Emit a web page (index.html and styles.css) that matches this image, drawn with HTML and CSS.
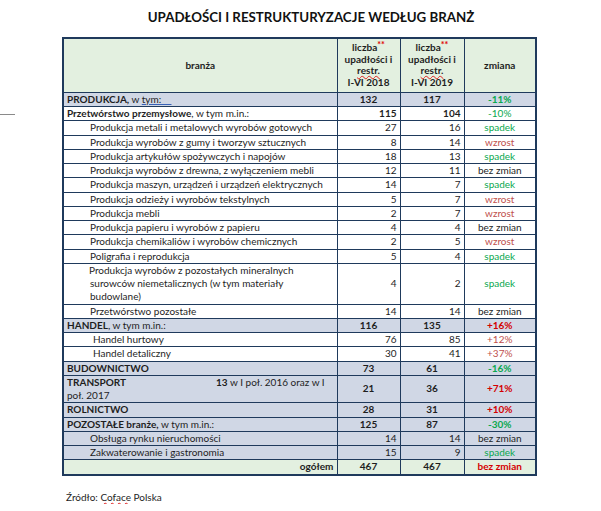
FILE: index.html
```html
<!DOCTYPE html>
<html lang="pl">
<head>
<meta charset="utf-8">
<title>Upadłości i restrukturyzacje według branż</title>
<link rel="stylesheet" href="styles.css">
</head>
<body>
<div class="mark"></div>
<div class="page">
  <h1 class="title">UPADŁOŚCI I RESTRUKTURYZACJE WEDŁUG BRANŻ</h1>
  <table class="tbl">
    <colgroup><col class="c1"><col class="c2"><col class="c3"><col class="c4"></colgroup>
    <thead>
      <tr class="head">
        <th>branża</th>
        <th>liczba<span class="ast">**</span><br>upadłości i<br><span class="sp">restr.</span><br>I-VI 2018</th>
        <th>liczba<span class="ast">**</span><br>upadłości i<br><span class="sp">restr.</span><br>I-VI 2019</th>
        <th>zmiana</th>
      </tr>
    </thead>
    <tbody>
      <tr class="cat"><td class="l"><b>PRODUKCJA,</b> w <span class="tym">tym:&nbsp;&nbsp;&nbsp;&nbsp;</span></td><td class="c b">132</td><td class="c b">117</td><td class="z g b">-11%</td></tr>
      <tr><td class="l"><b>Przetwórstwo przemysłowe</b>, w tym m.in.:</td><td class="r b">115</td><td class="r b">104</td><td class="z g">-10%</td></tr>
      <tr><td class="s">Produkcja metali i metalowych wyrobów gotowych</td><td class="r">27</td><td class="r">16</td><td class="z g">spadek</td></tr>
      <tr><td class="s">Produkcja wyrobów z gumy i tworzyw sztucznych</td><td class="r">8</td><td class="r">14</td><td class="z rd">wzrost</td></tr>
      <tr><td class="s">Produkcja artykułów spożywczych i napojów</td><td class="r">18</td><td class="r">13</td><td class="z g">spadek</td></tr>
      <tr><td class="s">Produkcja wyrobów z drewna, z wyłączeniem mebli</td><td class="r">12</td><td class="r">11</td><td class="z">bez zmian</td></tr>
      <tr><td class="s">Produkcja maszyn, urządzeń i urządzeń elektrycznych</td><td class="r">14</td><td class="r">7</td><td class="z g">spadek</td></tr>
      <tr><td class="s">Produkcja odzieży i wyrobów tekstylnych</td><td class="r">5</td><td class="r">7</td><td class="z rd">wzrost</td></tr>
      <tr><td class="s">Produkcja mebli</td><td class="r">2</td><td class="r">7</td><td class="z rd">wzrost</td></tr>
      <tr><td class="s">Produkcja papieru i wyrobów z papieru</td><td class="r">4</td><td class="r">4</td><td class="z">bez zmian</td></tr>
      <tr><td class="s">Produkcja chemikaliów i wyrobów chemicznych</td><td class="r">2</td><td class="r">5</td><td class="z rd">wzrost</td></tr>
      <tr><td class="s">Poligrafia i reprodukcja</td><td class="r">5</td><td class="r">4</td><td class="z g">spadek</td></tr>
      <tr><td class="s multi">Produkcja wyrobów z pozostałych mineralnych<br>surowców niemetalicznych (w tym materiały<br>budowlane)</td><td class="r">4</td><td class="r">2</td><td class="z g">spadek</td></tr>
      <tr><td class="s">Przetwórstwo pozostałe</td><td class="r">14</td><td class="r">14</td><td class="z">bez zmian</td></tr>
      <tr class="cat"><td class="l"><b>HANDEL</b>, w tym m.in.:</td><td class="c b">116</td><td class="c b">135</td><td class="z rb b">+16%</td></tr>
      <tr><td class="s2">Handel hurtowy</td><td class="r">76</td><td class="r">85</td><td class="z rd">+12%</td></tr>
      <tr><td class="s2">Handel detaliczny</td><td class="r">30</td><td class="r">41</td><td class="z rd">+37%</td></tr>
      <tr class="cat"><td class="l"><b>BUDOWNICTWO</b></td><td class="c b">73</td><td class="c b">61</td><td class="z g b">-16%</td></tr>
      <tr class="cat"><td class="l"><b class="tl">TRANSPORT</b><b>13</b> w I poł. 2016 oraz w I<br>poł. 2017</td><td class="c b">21</td><td class="c b">36</td><td class="z rb b">+71%</td></tr>
      <tr class="cat"><td class="l"><b>ROLNICTWO</b></td><td class="c b">28</td><td class="c b">31</td><td class="z rb b">+10%</td></tr>
      <tr class="cat"><td class="l"><b>POZOSTAŁE branże,</b> w tym m.in.:</td><td class="c b">125</td><td class="c b">87</td><td class="z g b">-30%</td></tr>
      <tr class="cat"><td class="s">Obsługa rynku nieruchomości</td><td class="r">14</td><td class="r">14</td><td class="z">bez zmian</td></tr>
      <tr class="cat"><td class="s">Zakwaterowanie i gastronomia</td><td class="r">15</td><td class="r">9</td><td class="z g">spadek</td></tr>
      <tr class="tot"><td class="r b">ogółem</td><td class="c b">467</td><td class="c b">467</td><td class="z rb b">bez zmian</td></tr>
    </tbody>
  </table>
  <p class="src">Źródło: <span class="sp">Coface</span> Polska</p>
</div>
</body>
</html>
```

FILE: styles.css
```css
html, body {
  margin: 0;
  background: #ffffff;
}
body {
  font-family: Lato, "Open Sans", sans-serif;
  color: #1e1e1e;
  position: relative;
}
.mark {
  position: absolute;
  left: 0;
  top: 114px;
  width: 15px;
  height: 1px;
  background: #8a8a8a;
}
.page {
  padding-left: 62px;
  width: 476px;
}
.title {
  margin: 0;
  padding: 9px 0 0 22px;
  height: 28px;
  box-sizing: content-box;
  font-size: 13.3px;
  line-height: 16px;
  font-weight: 700;
  text-align: center;
  color: #111;
}
.tbl {
  border-collapse: collapse;
  table-layout: fixed;
  width: 474px;
  border: 2px solid #1f3a5c;
  font-size: 10px;
}
.c1 { width: 274px; }
.c2 { width: 63px; }
.c3 { width: 64px; }
.c4 { width: 72px; }
.tbl th, .tbl td {
  border: 1px solid #1f3a5c;
  padding: 0 3px;
  line-height: 13.25px;
  vertical-align: middle;
  white-space: nowrap;
  overflow: hidden;
}
.head th {
  background: #e3f0e0;
  font-weight: 700;
  text-align: center;
  line-height: 11.7px;
  padding: 3px 2px 3px;
  height: 46px;
}
.ast {
  color: #e00000;
  font-size: 9px;
  position: relative;
  top: -3px;
}
.sp {
  text-decoration: underline wavy #e02020;
  text-decoration-thickness: 1px;
  text-underline-offset: 1px;
}
.cat td { background: #d0d7e5; }
.tot td { background: #e3f0e0; }
.l { padding-left: 2px; }
.s { padding-left: 26px !important; }
.s2 { padding-left: 29px !important; }
.multi { text-indent: -1px; }
.tym {
  text-decoration: underline #3a63b8;
  text-underline-offset: 1px;
}
.tl {
  display: inline-block;
  width: 149px;
}
.b { font-weight: 700; }
.r { text-align: right; }
.c { text-align: center; }
.z { text-align: center; }
.g { color: #0aa84f; }
.rd { color: #c0504d; }
.rb { color: #d40000; }
.tbl td.r { padding-right: 3px; }
.src {
  margin: 15px 0 0 4px;
  font-size: 10px;
  line-height: 13px;
}
```
